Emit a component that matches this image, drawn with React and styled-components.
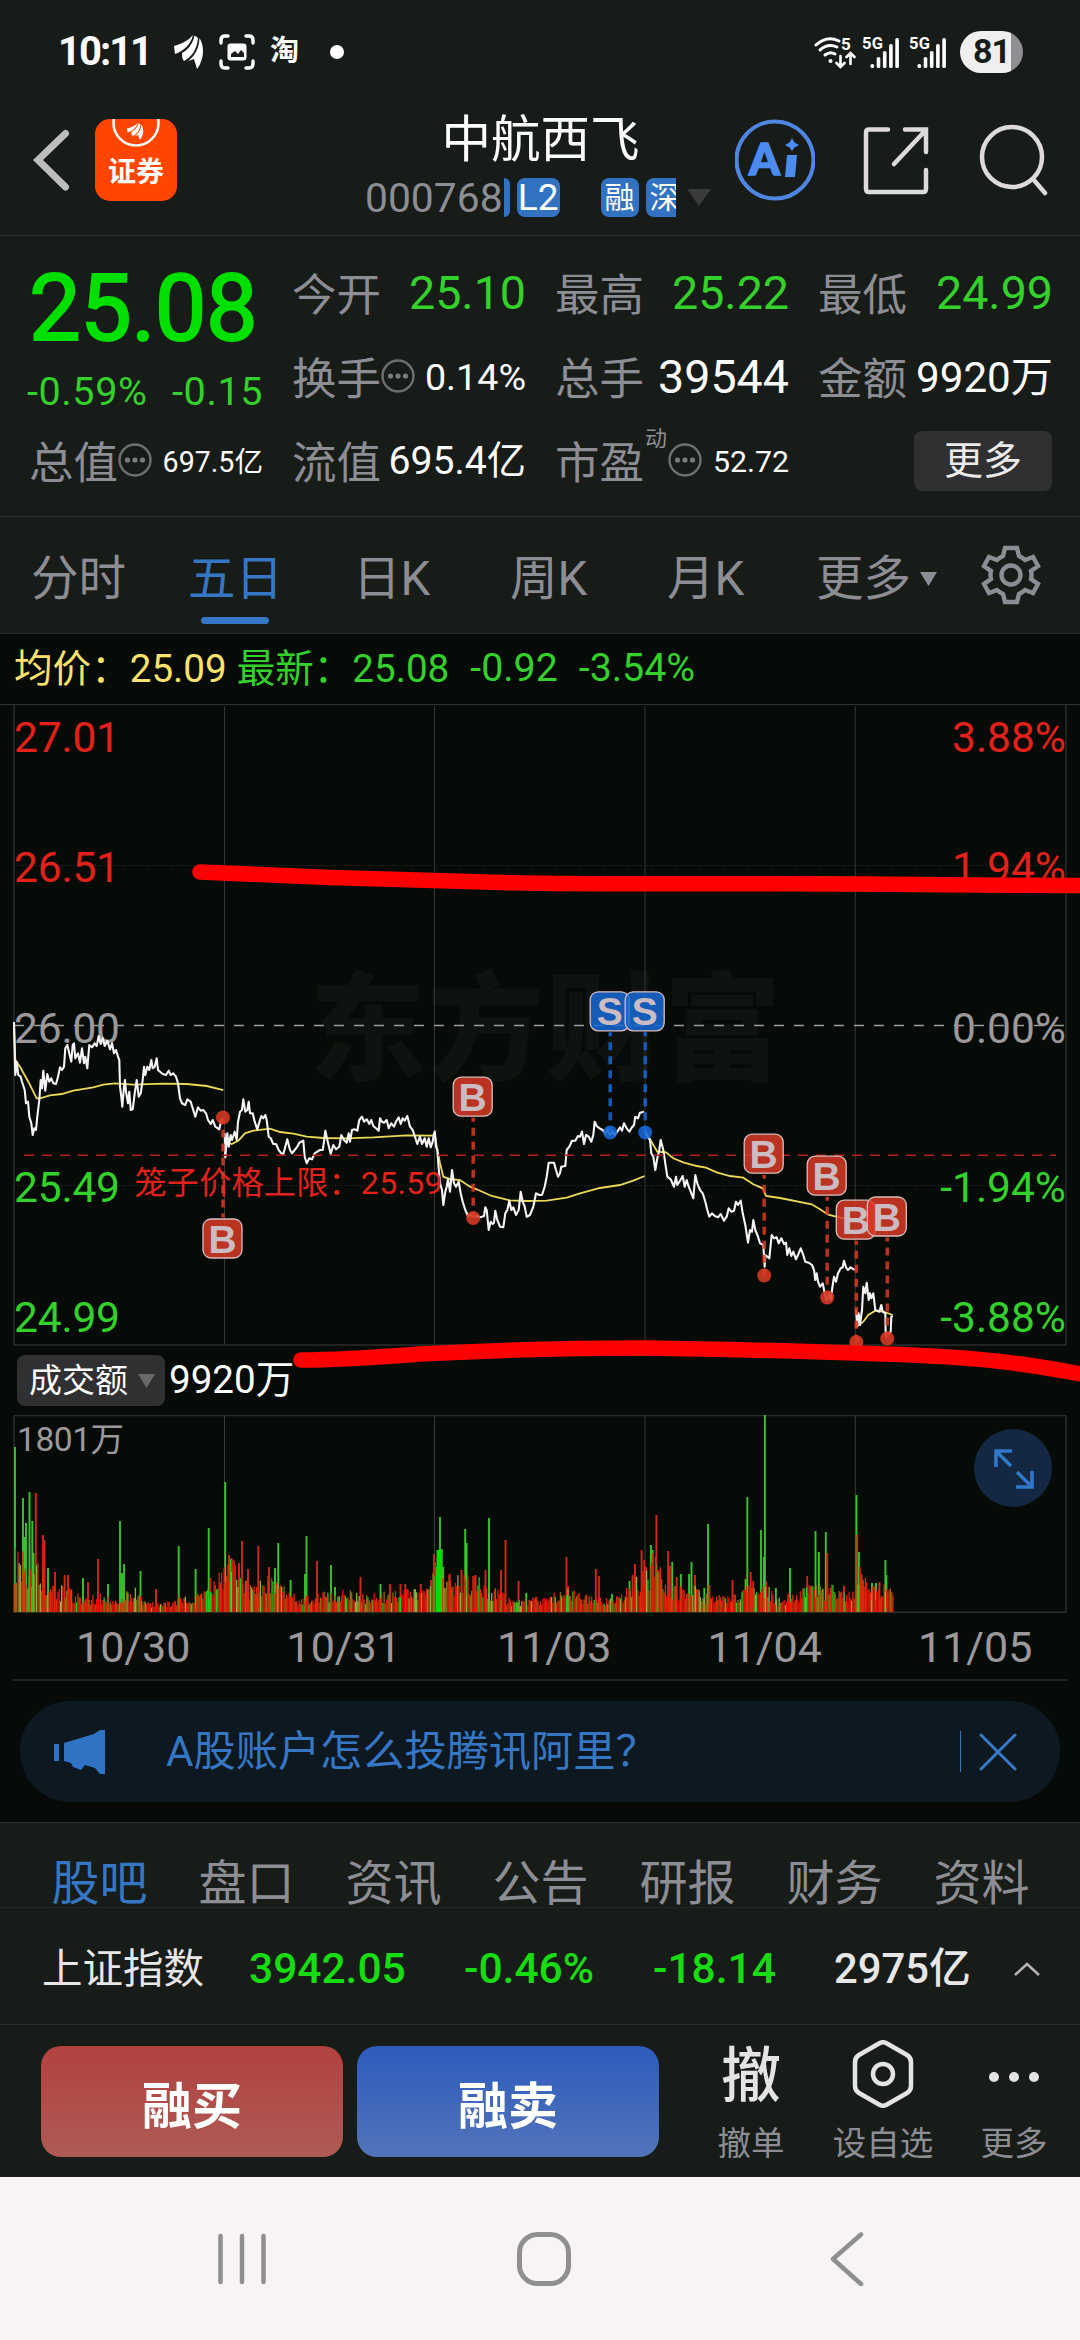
import React from "react";
import styled, { createGlobalStyle } from "styled-components";

const C = {
  panel: "#181c19",
  chart: "#070b07",
  line: "#303331",
  green: "#34d12c",
  bright: "#00e000",
  red: "#e3211a",
  grey: "#8d8d94",
  axis: "#9b999c",
  blue: "#3577c4",
  white: "#fcfcfc",
};

const Global = createGlobalStyle`
  * { box-sizing: border-box; }
  body { margin: 0; background: ${C.panel}; }
  svg { display: block; flex: none; }
  svg text { font-family: Roboto, "Noto Sans CJK SC", sans-serif; }
`;

const Screen = styled.div`
  width: 1080px;
  height: 2340px;
  overflow: hidden;
  display: flex;
  flex-direction: column;
  background: ${C.panel};
  color: ${C.white};
  font-family: Roboto, "Noto Sans CJK SC", sans-serif;
  white-space: nowrap;
`;

const Txt = styled.span`
  font-size: ${(p) => p.$s}px;
  line-height: 1.15;
  color: ${(p) => p.$c || "inherit"};
  font-weight: ${(p) => p.$w || 400};
  letter-spacing: ${(p) => p.$ls || 0}px;
`;

/* ---------- status bar ---------- */
const StatusBar = styled.div`
  height: 100px;
  padding: 4px 57px 0 58px;
  display: flex;
  align-items: center;
`;
const Notices = styled.div`
  display: flex;
  align-items: center;
  gap: 15px;
  margin-left: 23px;
`;
const Signals = styled.div`
  display: flex;
  align-items: center;
  gap: 8px;
  margin-left: auto;
`;
const Battery = styled.div`
  width: 63px;
  height: 42px;
  margin-left: 4px;
  border-radius: 21px;
  background: linear-gradient(90deg, #efeff0 81%, #918e93 81%);
  color: #181c19;
  display: flex;
  align-items: center;
  justify-content: center;
`;

/* ---------- header ---------- */
const Header = styled.header`
  height: 136px;
  padding: 0 26px 16px 32px;
  display: flex;
  align-items: center;
  border-bottom: 1px solid ${C.line};
`;
const AppLogo = styled.div`
  width: 82px;
  height: 82px;
  margin-left: 23px;
  border-radius: 15px;
  background: #ff4500;
  display: flex;
  flex-direction: column;
  align-items: center;
  overflow: hidden;
  gap: 4px;
`;
const TitleBlock = styled.div`
  width: 351px;
  margin: 4px 19px 0 188px;
  display: flex;
  flex-direction: column;
  align-items: center;
  gap: 9px;
  padding-top: 7px;
`;
const CodeRow = styled.div`
  width: 100%;
  height: 40px;
  display: flex;
  align-items: center;
`;
const Tags = styled.div`
  width: 172px;
  margin: 0 11px 0 1px;
  display: flex;
  overflow: hidden;
`;
const Tag = styled.span`
  flex: none;
  width: ${(p) => p.$w}px;
  height: 39px;
  margin-right: ${(p) => p.$mr || 7}px;
  border-radius: ${(p) => (p.$cut ? "0 8px 8px 0" : "8px")};
  background: #3173c2;
  font-size: ${(p) => p.$s || 30}px;
  line-height: 39px;
  text-align: center;
`;

/* ---------- quote ---------- */
const Quote = styled.section`
  height: 281px;
  padding: 16px 28px 0 29px;
  display: flex;
  gap: 31px;
  border-bottom: 1px solid ${C.line};
`;
const PriceCol = styled.div`
  width: 232px;
  display: flex;
  flex-direction: column;
`;
const Price = styled.div`
  height: 112px;
  line-height: 114px;
  font-size: 92px;
  letter-spacing: -0.6px;
  color: ${C.bright};
  -webkit-text-stroke: 2px ${C.bright};
`;
const Change = styled.div`
  height: 56px;
  display: flex;
  align-items: center;
  justify-content: space-between;
  margin: 0 -2px 0 -2px;
`;
const Stats = styled.div`
  flex: 1;
  display: grid;
  grid-template-columns: 232px 232px 233px;
  grid-auto-rows: 84px;
  column-gap: 31px;
`;
const Stat = styled.div`
  height: 84px;
  display: flex;
  align-items: center;
  justify-content: space-between;
  margin-right: -2px;
`;
const StatLabel = styled.span`
  display: flex;
  align-items: center;
  font-size: 44.5px;
  padding-bottom: 5px;
  color: ${C.grey};
`;
const Sup = styled.sup`
  font-size: 22px;
  line-height: 24px;
  margin: 0 1px 41px 1px;
  vertical-align: baseline;
`;
const MoreButton = styled.button`
  width: 138px;
  height: 60px;
  margin: 0 1px 3px auto;
  border: 0;
  border-radius: 8px;
  background: #302f31;
  color: #ecebec;
  font: 39px/58px Roboto, "Noto Sans CJK SC", sans-serif;
  padding: 0;
`;

/* ---------- period tabs ---------- */
const Periods = styled.nav`
  height: 117px;
  padding-left: 31px;
  display: flex;
  border-bottom: 1px solid #2a2b2a;
`;
const Period = styled.div`
  width: ${(p) => p.$w}px;
  flex: none;
  padding-top: ${(p) => p.$top || 34}px;
  font-size: 47.5px;
  line-height: 56px;
  color: ${(p) => (p.$on ? C.blue : C.grey)};
`;
const Underline = styled.div`
  width: 68px;
  height: 7px;
  margin: 10px 0 0 13px;
  border-radius: 4px;
  background: ${C.blue};
`;
const PeriodMore = styled.div`
  display: flex;
  align-items: center;
  gap: 9px;
`;

/* ---------- charts ---------- */
const ChartArea = styled.section`
  position: relative;
  height: 1189px;
  background: ${C.chart};
  border-bottom: 1px solid ${C.line};
`;
const Legend = styled.div`
  height: 70px;
  padding-left: 14px;
  display: flex;
  align-items: center;
  gap: 21px;
  color: ${C.green};
`;
const LegendPair = styled.div`
  display: flex;
  gap: 10px;
`;
const Indicator = styled.div`
  height: 69px;
  padding: 0 0 0 17px;
  display: flex;
  align-items: center;
  gap: 4px;
`;
const Picker = styled.div`
  width: 148px;
  height: 51px;
  padding-left: 12px;
  border-radius: 8px;
  background: #302f31;
  display: flex;
  align-items: center;
  gap: 10px;
`;
const Dates = styled.div`
  height: 69px;
  margin: 0 13px;
  padding: 4px 0 0 15px;
  display: grid;
  grid-template-columns: repeat(5, 210.5px);
  align-items: center;
  justify-items: center;
  border-bottom: 2px solid #242725;
`;
const VolumeBox = styled.div`
  position: relative;
  height: 197px;
`;
const Expand = styled.div`
  position: absolute;
  left: 974px;
  top: 14px;
`;
const Scribble = styled.svg`
  position: absolute;
  left: 0;
  top: 0;
  pointer-events: none;
`;

const Banner = styled.div`
  width: 1040px;
  height: 101px;
  margin: 20px 20px 0;
  padding: 0 43px 0 33px;
  border-radius: 50px;
  background: #0e1820;
  display: flex;
  align-items: center;
`;
const BannerText = styled.div`
  margin-left: 59px;
  flex: 1;
  font-size: 42.200px;
  line-height: 50px;
  color: ${C.blue};
`;
const Divider = styled.div`
  width: 1px;
  height: 41px;
  margin-right: 18px;
  background: ${C.blue};
`;

/* ---------- bottom ---------- */
const InfoTabs = styled.nav`
  height: 85px;
  padding: 33px 25px 0 26px;
  display: grid;
  grid-template-columns: repeat(7, 147px);
  border-bottom: 1px solid #222623;
`;
const InfoTab = styled.div`
  height: 52px;
  text-align: center;
  font-size: 48px;
  line-height: 56px;
  color: ${(p) => (p.$on ? C.blue : C.grey)};
`;
const IndexRow = styled.div`
  height: 117px;
  padding: 5px 40px 0 42px;
  display: flex;
  align-items: center;
  border-bottom: 1px solid #2b2e2c;
`;
const IndexCell = styled.div`
  width: ${(p) => p.$w}px;
  font-size: ${(p) => p.$s || 42.5}px;
  line-height: 52px;
  font-weight: ${(p) => p.$b || 500};
  color: ${(p) => p.$c || "#e8e6e7"};
`;
const Actions = styled.div`
  height: 152px;
  padding: 21px 0 0 41px;
  display: flex;
`;
const TradeButton = styled.button`
  flex: none;
  width: 302px;
  height: 111px;
  margin-right: 14px;
  border: 0;
  border-radius: 20px;
  background: linear-gradient(${(p) => p.$from}, ${(p) => p.$to});
  color: #fff;
  font: 700 50px/60px Roboto, "Noto Sans CJK SC", sans-serif;
  padding: 10px 0 0;
`;
const Action = styled.div`
  flex: none;
  width: ${(p) => p.$w}px;
  display: flex;
  flex-direction: column;
  align-items: center;
`;
const ActionIcon = styled.div`
  height: 62px;
  display: flex;
  align-items: center;
  font-size: 60px;
  line-height: 60px;
  font-weight: 500;
  color: #e4e4e4;
  margin-bottom: 17px;
`;
const SystemNav = styled.div`
  flex: 1;
  padding: 0 0 0 218px;
  background: #f7f3f7;
  display: flex;
  align-items: center;
`;

/* ---------- icons ---------- */
const Feather = ({ w, h }) => (
  <svg width={w} height={h} viewBox="0 0 30 34" fill="#fff">
    <path d="M0 11 C7 9 14 6 19 0 C17 9 10 16 1 19 Z" />
    <path d="M20.500 .5 L24 3 C23 14 18 22 10 26 C8 24 8 21 8 18 C15 14 19 8 20.500 .5Z" />
    <path d="M25.500 3 C31 12 30 25 23 34 L20 24 L14 26 C22 20 25 12 25.500 3Z" />
  </svg>
);
const Shot = () => (
  <svg width="36" height="36" viewBox="0 0 36 36" fill="none">
    <path
      d="M2 9V6Q2 2 6 2H9M27 2H30Q34 2 34 6V9M34 27V30Q34 34 30 34H27M9 34H6Q2 34 2 30V27"
      stroke="#fff"
      strokeWidth="3.400"
      strokeLinecap="round"
    />
    <rect x="8.500" y="9.500" width="19" height="17" rx="3" fill="#fff" />
    <path d="M12 23v-3l4-3 3 3 3-4 3 3v4z" fill="#181c19" />
  </svg>
);
const Wifi = () => (
  <svg width="42" height="34" viewBox="0 0 42 34" fill="none" stroke="#fff" strokeLinecap="round" style={{ marginRight: -2 }}>
    <path d="M2 10Q13 0 25 6" strokeWidth="3" />
    <path d="M6 15Q14 8 23 12" strokeWidth="3" />
    <path d="M11 20Q16 16 21 19" strokeWidth="3" />
    <circle cx="16.500" cy="26" r="2" fill="#fff" stroke="none" />
    <path d="M26.500 21V31M22.500 28L26.500 32L30.500 28M36.500 29V19M32.500 22L36.500 18L40.500 22" strokeWidth="2.600" />
    <text x="27" y="15" fontSize="17" fontWeight="700" fill="#fff" stroke="none">5</text>
  </svg>
);
const Signal5G = () => (
  <svg width="39" height="34" viewBox="0 0 39 34" fill="#fff">
    <text x="0" y="13.500" fontSize="16.500" fontWeight="700" textLength="21">5G</text>
    {[4, 11, 17, 24, 30].map((h, i) => (
      <rect key={i} x={8.500 + i * 6.200} y={33 - h} width="3.600" height={h} rx="1.600" />
    ))}
  </svg>
);
const MoreDots = () => (
  <svg width="34" height="34" viewBox="0 0 34 34">
    <circle cx="17" cy="17" r="15.500" fill="none" stroke="#706f70" strokeWidth="2.400" />
    {[9.500, 17, 24.500].map((x) => (
      <circle key={x} cx={x} cy="17" r="2.600" fill="#7c7b7e" />
    ))}
  </svg>
);
const Down = ({ w, h, c }) => (
  <svg width={w} height={h} viewBox="0 0 20 16" preserveAspectRatio="none">
    <path d="M0 0H20L10 16Z" fill={c} />
  </svg>
);
const Gear = () => (
  <svg width="60" height="60" viewBox="-30 -30 60 60" fill="none" stroke={C.grey} strokeWidth="4.400">
    <path d="M-6 -27H6L8 -19Q12 -17 14 -15L22 -18L27 -9L20 -4Q21 0 20 4L27 9L22 18L14 15Q12 17 8 19L6 27H-6L-8 19Q-12 17 -14 15L-22 18L-27 9L-20 4Q-21 0 -20 -4L-27 -9L-22 -18L-14 -15Q-12 -17 -8 -19Z" />
    <circle r="9.500" />
  </svg>
);

/* ---------- chart data ---------- */
/* Each series keeps its own plotting origin; three units make one pixel. */
const priceSeries = [
  [0, 920, "42,306 44,400 46,465 50,425 55,465 62,470 66,485 74,510 78,550 84,545 88,590 94,610 98,645 103,625 108,630 112,590 118,540 122,480 126,505 130,452 136,512 142,462 148,485 154,475 160,490 168,492 174,470 180,442 186,450 192,440 196,385 202,375 208,400 214,425 218,375 222,370 226,415 234,400 240,428 246,385 252,430 256,410 262,445 268,375 276,382 284,370 290,378 296,348 302,372 308,355 314,378 322,362 330,388 336,370 342,400 348,390 354,410 358,420 360,500 364,530 367,560 372,500 375,480 378,515 384,550 388,515 392,570 398,568 404,520 410,480 416,530 422,520 428,480 432,440 436,465 442,440 448,450 454,420 458,445 464,440 470,415 474,450 480,455 488,462 498,465 506,452 512,465 520,460 528,470 534,490 540,535 546,550 556,555 562,538 572,545 578,565 586,590 594,562 602,572 610,570 618,580 624,600 632,612 638,600 646,620 658,628 664,600 668,595"],
  [0, 920, "674,640 676,712 682,640 686,680 692,645 696,660 704,635 710,660 714,605 720,575 726,570 730,538 736,575 742,570 746,545 750,580 758,580 764,605 772,628 780,600 784,588 790,595 796,585 800,600 806,650 812,655 820,672 828,672 836,690 844,700 850,702 856,680 862,658 870,690 876,700 884,690 892,680 898,668 910,662 914,710 920,730 928,715 936,718 944,700 952,695 960,690 968,690 972,665 976,632 984,668 992,702 1000,675 1008,688 1018,680 1024,645 1032,660 1040,668 1046,640 1050,665 1056,630 1064,628 1072,632 1078,600 1086,590 1092,605 1100,598 1108,612 1114,600 1120,618 1128,625 1136,632 1140,595 1146,605 1152,608 1160,600 1166,625 1174,610 1182,620 1188,605 1196,592 1202,612 1208,595 1214,602 1222,588 1230,620 1238,630 1244,648 1252,672 1260,650 1266,672 1274,655 1280,680 1286,655 1292,682 1298,665 1302,640 1306,640"],
  [420, 920, "44,632 48,680 52,690 56,745 60,790 66,810 70,855 76,815 80,800 84,778 90,815 96,750 102,790 108,800 116,785 122,820 128,845 136,870 144,888 152,885 160,890 170,888 182,892 192,888 196,862 200,870 206,930 212,905 218,912 222,908 226,872 232,900 240,920 250,922 256,880 262,870 268,842 274,870 280,862 288,885 296,870 302,815 308,845 314,860 320,890 330,885 340,860 348,820 358,825 366,825 374,800 380,770 386,728 402,728 408,750 414,770 420,760 424,740 436,738 440,690 448,680 456,662 466,662 474,648 480,650 486,635 492,672 498,645 506,650 514,665 520,645 524,605 530,618 538,625 548,630 556,640 564,628 570,645 578,635 584,645 592,635 600,622 606,632 612,610 620,625 628,635 636,622 642,615 646,590 654,595 660,578 672,575"],
  [420, 920, "676,632 682,650 690,660 694,700 700,710 706,750 712,715 718,690 722,660 730,690 736,730 742,770 752,778 762,800 768,770 772,795 780,782 788,768 794,800 800,780 806,800 812,815 820,835 826,765 832,790 840,810 848,820 856,845 862,870 868,890 876,880 884,888 894,892 902,882 912,902 920,890 926,865 934,875 942,872 948,845 954,855 962,842 968,880 976,915 984,968 990,930 996,935 1000,900 1006,930 1014,950 1020,970 1030,975 1034,1040 1036,1005 1048,1015 1055,945 1062,955 1070,952 1076,970 1084,955 1092,972 1098,968 1102,1005 1108,985 1114,1008 1120,995 1128,1018 1134,1005 1142,985 1148,1000 1156,1025 1166,1028 1176,1035 1182,1050 1186,1080 1190,1060 1194,1085 1200,1100 1208,1090 1214,1120 1220,1140 1226,1120 1232,1140 1236,1110 1242,1070 1248,1085 1254,1060 1262,1045 1268,1042 1272,1022 1278,1042 1284,1050 1292,1042 1304,1050"],
  [720, 1080, "408,690 412,735 416,700 420,735 426,690 430,620 436,640 440,608 446,660 450,640 454,655 460,640 466,690 472,692 478,695 484,675 488,695 496,700 497,765 500,770 512,755 514,710 518,708"],
];
const averageSeries = [
  [0, 920, "42,310 46,420 60,440 85,485 110,535 120,535 150,526 185,522 220,512 280,502 310,494 345,490 400,494 490,491 560,492 620,498 670,510"],
  [0, 920, "674,665 695,672 715,662 735,640 760,632 810,626 840,636 880,641 920,650 970,654 1040,655 1120,652 1220,646 1302,647"],
  [420, 920, "44,640 50,680 60,730 70,770 90,777 120,780 150,800 170,808 215,828 270,841 320,843 380,842 440,833 480,820 540,804 600,795 640,782 674,768"],
  [420, 920, "680,640 700,675 712,695 738,697 760,715 790,727 830,738 858,743 890,757 930,768 970,773 1000,793 1028,805 1038,828 1080,834 1175,853 1200,868 1225,884 1260,893 1304,900"],
  [720, 1080, "408,742 430,725 445,705 466,692 490,695 518,705"],
];
const toPoints = ([ox, oy, raw]) =>
  raw
    .split(" ")
    .map((p) => {
      const [x, y] = p.split(",");
      return `${(ox + x / 3).toFixed(1)},${(oy + y / 3).toFixed(1)}`;
    })
    .join(" ");

const marks = [
  ["B", 222.5, 1238.5, 1117.5],
  ["B", 472.7, 1096.7, 1218],
  ["S", 609.7, 1011.3, 1132.5],
  ["S", 644.7, 1011.3, 1132.5],
  ["B", 763.7, 1153.7, 1275.5],
  ["B", 826.7, 1175.7, 1297.5],
  ["B", 855.8, 1219.7, 1342],
  ["B", 886.8, 1216.5, 1338.5],
];

const axis = [
  ["27.01", "3.88%", 751.5, C.red],
  ["26.51", "1.94%", 882, C.red],
  ["26.00", "0.00%", 1042.5, C.axis],
  ["25.49", "-1.94%", 1201.5, C.green],
  ["24.99", "-3.88%", 1332.3, C.green],
];
const days = [224.5, 434.5, 645, 855.3];

/* Tall volume bars: x, height, rising or falling. */
const spikes =
  "15,165,g 23,114,g 24.5,75,g 26,89,g 29.5,120,g 32.3,91,g 33.5,59,g 35.8,119,r 43,77,r 44.5,72,r 48,44,g 55,40,r 64.7,37,r 68,37,r 83,34,g 88,30,r 98,53,r 108,28,g 120,91,g 122,39,g 124,48,g 140.500,41,g 156,23,r 178.700,66,g 195.600,43,g 208.700,84,g 210.400,34,r 225.200,130,g 229,57,r 231.400,54,r 239,49,r 242,71,r 248,43,r 258.300,66,r 269,45,r 275,44,g 278.200,69,g 290.600,32,g 305,38,g 306.500,76,g 317,51,r 331,47,g 335,25,g 360.500,35,r 380.500,28,g 390,28,r 400.500,28,r 405.300,28,r 420.800,28,r 431,32,r 433.900,58,r 438,62,g 440,95,g 441.800,63,g 443.200,45,g 449.700,38,r 461.500,42,r 465.200,83,g 466.600,69,g 475.500,37,r 489,94,g 485.500,42,r 501,42,r 505.500,72,r 518.600,31,r 526.200,19,g 566.500,55,r 568.200,26,r 595.800,43,r 598.900,36,r 612,18,g 629.500,31,g 632.600,37,r 635,48,r 641.600,62,r 644.300,52,r 646,45,r 650.900,67,g 652.600,62,g 656.400,97,r 658.500,42,r 668.100,61,r 669.800,46,r 672.200,50,g 676.700,35,r 680.800,38,g 689.100,38,g 691.500,50,g 695,37,r 704.300,24,g 708,88,g 709.400,27,r 732.500,32,r 745.600,33,g 747.300,115,g 750.700,40,r 753.200,31,r 761,82,g 763.800,55,g 764.900,197,g 765.900,27,r 775.900,24,g 790,44,g 788.300,18,r 807.200,36,r 815.500,81,g 818.900,60,g 825.800,80,g 827.200,59,r 844,26,r 856.500,117,g 857.200,77,r 858.900,60,g 859.900,45,r 861.300,37,r 863,32,r 872,29,g 876,29,g 879.500,30,r 885.400,52,g 886.400,37,g 891.200,20,r"
    .split(" ")
    .map((s) => s.split(","));

/* Upper edge of the short bars. */
const envelope = [
  [13, 62], [26, 52], [38, 46], [52, 26], [70, 20], [84, 14], [100, 16], [116, 12], [134, 24], [144, 10],
  [165, 8], [180, 16], [192, 14], [208, 20], [222, 44], [232, 52], [240, 36], [252, 22], [268, 34], [284, 22],
  [300, 12], [320, 18], [345, 20], [370, 16], [400, 20], [425, 20], [434, 48], [445, 34], [462, 34], [480, 30],
  [500, 18], [515, 10], [545, 15], [566, 22], [580, 16], [612, 12], [630, 24], [645, 44], [655, 54], [665, 28],
  [678, 22], [690, 26], [705, 16], [725, 14], [742, 18], [750, 36], [760, 22], [766, 30], [775, 12], [790, 14],
  [810, 26], [830, 24], [845, 18], [854, 18], [860, 44], [868, 22], [885, 28], [893, 16],
];
const levelAt = (x) => {
  for (let i = 1; i < envelope.length; i++) {
    const [x0, h0] = envelope[i - 1];
    const [x1, h1] = envelope[i];
    if (x <= x1) return h0 + ((h1 - h0) * (x - x0)) / (x1 - x0);
  }
  return 0;
};
const shortBars = [];
let seed = 17;
const rand = () => (seed = (seed * 16807) % 2147483647) / 2147483647;
for (let x = 13.5; x < 893; x += 1.25) {
  const h = levelAt(x) * (0.45 + 0.72 * rand());
  const r = rand();
  shortBars.push([x, h, r < 0.5 ? "#dc280a" : r < 0.66 ? "#f40800" : r < 0.8 ? "#8c6a0c" : r < 0.9 ? "#8fb03c" : "#22c81a"]);
}

function PriceChart() {
  return (
    <svg width="1080" height="642" viewBox="0 704 1080 642">
      <text x="309" y="1071" fontSize="117" fontWeight="900" fill="#0f130f" textLength="472">东方财富</text>
      <path d="M0 704.500H1080" stroke={C.line} />
      <path d="M14 704V1345H1066V704" fill="none" stroke="#2a2d2b" strokeWidth="1.500" />
      {days.map((x) => (
        <path key={x} d={`M${x} 706V1344`} stroke="#343735" />
      ))}
      <path d="M14 865.500H1066M14 1185.500H1066" stroke="#2c2f2d" strokeDasharray="1 2" />
      <path d="M14 1025.500H1066" stroke="#9b9b9b" strokeWidth="1.600" strokeDasharray="10 10" />
      {axis.map(([l, r, y, c]) => (
        <g key={l} fill={c} fontSize="42.500">
          <text x="14" y={y} textLength="106">{l}</text>
          <text x="1066" y={y} textAnchor="end">{r}</text>
        </g>
      ))}
      {averageSeries.map((s, i) => (
        <polyline key={i} points={toPoints(s)} fill="none" stroke="#ecd955" strokeWidth="1.800" />
      ))}
      {priceSeries.map((s, i) => (
        <polyline key={i} points={toPoints(s)} fill="none" stroke="#f6f4f6" strokeWidth="2.100" strokeLinejoin="round" />
      ))}
      <path d="M24 1155.300H1056" stroke="#b31f1c" strokeWidth="1.500" strokeDasharray="10 8" />
      <text x="134.500" y="1194" fontSize="32" fill={C.red} textLength="308">笼子价格上限：25.59</text>
      {marks.map(([t, x, y, dot], i) => {
        const c = t === "B" ? "#d93a26" : "#1668d6";
        const dir = dot > y ? 1 : -1;
        return (
          <g key={i}>
            <path d={`M${x + 0.5} ${y + dir * 21}V${dot}`} stroke={c} strokeWidth="3.500" strokeDasharray="8 6" strokeDashoffset="4" opacity=".85" />
            <circle cx={x + 0.5} cy={dot} r="7" fill={c} opacity=".88" />
            <rect x={x - 19.500} y={y - 19.500} width="39" height="39" rx="8" fill={c} fillOpacity=".85" stroke="#d8bebe" strokeWidth="1.300" />
            <text x={x} y={y + 14} textAnchor="middle" fontSize="39" fontWeight="700" fill="#cbbcc2" style={{ fontFamily: "Liberation Sans, sans-serif" }}>
              {t}
            </text>
          </g>
        );
      })}
    </svg>
  );
}

function VolumeChart() {
  return (
    <svg width="1080" height="198" viewBox="0 1415 1080 198">
      <path d="M14 1415.500H1066V1612.300H14Z" fill="none" stroke="#2a2d2b" strokeWidth="1.500" />
      {days.map((x) => (
        <path key={x} d={`M${x} 1416V1612`} stroke="#3a3a3a" />
      ))}
      {spikes.map(([x, h, k], i) => (
        <rect key={i} x={x - 0.95} y={1612 - h} width="1.900" height={h} fill={k === "g" ? "#38c42d" : "#d2261a"} />
      ))}
      {shortBars.map(([x, h, c], i) => (
        <rect key={i} x={x} y={1612 - h} width="1.300" height={h} fill={c} />
      ))}
      <rect x="436.500" y="1550" width="5.500" height="62" fill="#08dc08" />
      <text x="17" y="1451" fontSize="33.500" fill={C.axis} textLength="107">1801万</text>
    </svg>
  );
}

export default function App() {
  return (
    <Screen>
      <Global />
      <StatusBar>
        <Txt $s={40} $w={700} $ls={-2}>10:11</Txt>
        <Notices>
          <Feather w={30} h={34} />
          <Shot />
          <Txt $s={29} $w={700}>淘</Txt>
          <svg width="52" height="14"><circle cx="23" cy="7" r="7" fill="#fff" /></svg>
        </Notices>
        <Signals>
          <Wifi />
          <Signal5G />
          <Signal5G />
          <Battery><Txt $s={34} $w={700} $ls={-1}>81</Txt></Battery>
        </Signals>
      </StatusBar>

      <Header>
        <svg width="40" height="64" viewBox="0 0 40 64" fill="none">
          <path d="M33.500 5.500L6 32L33.500 59" stroke="#bdbdbd" strokeWidth="7" strokeLinecap="round" />
        </svg>
        <AppLogo>
          <svg width="82" height="34" viewBox="0 0 82 34" fill="none">
            <circle cx="41" cy="4" r="22.500" stroke="#fff" strokeWidth="2.500" />
            <g transform="translate(32 4) scale(.56 .5)" fill="#fff">
              <path d="M0 11 C7 9 14 6 19 0 C17 9 10 16 1 19 Z M20.500 .5L24 3C23 14 18 22 10 26 C8 24 8 21 8 18C15 14 19 8 20.500 .5Z M25.500 3C31 12 30 25 23 34L20 24L14 26C22 20 25 12 25.500 3Z" />
            </g>
          </svg>
          <Txt $s={28} $w={700}>证券</Txt>
        </AppLogo>
        <TitleBlock>
          <Txt $s={49.5}>中航西飞</Txt>
          <CodeRow>
            <Txt $s={40.8} $c={C.grey}>000768</Txt>
            <Tags>
              <Tag $w={6} $cut $s={24} />
              <Tag $w={43} $mr={41} $s={37}>L2</Tag>
              <Tag $w={38}>融</Tag>
              <Tag $w={38}>深</Tag>
            </Tags>
            <Down w={24} h={17} c="#3b3b3b" />
          </CodeRow>
        </TitleBlock>
        <svg width="80" height="82" viewBox="0 0 80 82">
          <circle cx="40" cy="41" r="38.500" fill="none" stroke="#4f86e2" strokeWidth="4" />
          <text x="14" y="56" fontSize="44" fontWeight="900" fill="#4c8bf0" stroke="#4c8bf0" strokeWidth="1.500" style={{ fontFamily: "Lato, sans-serif" }}>A</text>
          <path d="M52 36H62L60 58H50Z M57 19L59.500 23.500L64 26L59.500 28.500L57 32L54.500 28.500L50 26L54.500 23.500Z" fill="#4c8bf0" />
        </svg>
        <svg width="68" height="70" viewBox="0 0 68 70" fill="none" stroke="#dcdadd" strokeWidth="4.500" strokeLinecap="round" style={{ marginLeft: 48 }}>
          <path d="M25 4.500H6Q3 4.500 3 7.500V64Q3 67 6 67H60Q63 67 63 64V45M42 4.500H63V27M61 7L31 39" />
        </svg>
        <svg width="72" height="72" viewBox="0 0 72 72" fill="none" stroke="#dcdadd" strokeWidth="4.500" strokeLinecap="round" style={{ marginLeft: 48 }}>
          <circle cx="33" cy="33" r="30" />
          <path d="M54 55L66 69" />
        </svg>
      </Header>

      <Quote>
        <PriceCol>
          <Price>25.08</Price>
          <Change>
            <Txt $s={39.5} $ls={0.6} $c={C.green}>-0.59%</Txt>
            <Txt $s={39.5} $ls={0.6} $c={C.green}>-0.15</Txt>
          </Change>
          <Stat>
            <StatLabel>总值<MoreDots /></StatLabel>
            <Txt $s={28.6}>697.5亿</Txt>
          </Stat>
        </PriceCol>
        <Stats>
          <Stat><StatLabel>今开</StatLabel><Txt $s={46.6} $c={C.green}>25.10</Txt></Stat>
          <Stat><StatLabel>最高</StatLabel><Txt $s={46.6} $c={C.green}>25.22</Txt></Stat>
          <Stat><StatLabel>最低</StatLabel><Txt $s={46.6} $c={C.green}>24.99</Txt></Stat>
          <Stat><StatLabel>换手<MoreDots /></StatLabel><Txt $s={37.7}>0.14%</Txt></Stat>
          <Stat><StatLabel>总手</StatLabel><Txt $s={46.6}>39544</Txt></Stat>
          <Stat><StatLabel>金额</StatLabel><Txt $s={42.2}>9920万</Txt></Stat>
          <Stat><StatLabel>流值</StatLabel><Txt $s={39.2}>695.4亿</Txt></Stat>
          <Stat><StatLabel>市盈<Sup>动</Sup><MoreDots /></StatLabel><Txt $s={30.3}>52.72</Txt></Stat>
          <Stat><MoreButton>更多</MoreButton></Stat>
        </Stats>
      </Quote>

      <Periods>
        <Period $w={157}>分时</Period>
        <Period $w={165} $on>五日<Underline /></Period>
        <Period $w={157}>日K</Period>
        <Period $w={157}>周K</Period>
        <Period $w={149}>月K</Period>
        <Period $w={165}>
          <PeriodMore>更多<Down w={17} h={14} c={C.grey} /></PeriodMore>
        </Period>
        <Period $w={70} $top={28}><Gear /></Period>
      </Periods>

      <ChartArea>
        <Legend>
          <LegendPair>
            <Txt $s={38.6} $c="#fbe26b">均价：25.09</Txt>
            <Txt $s={38.6}>最新：25.08</Txt>
          </LegendPair>
          <Txt $s={39.3}>-0.92</Txt>
          <Txt $s={39.3}>-3.54%</Txt>
        </Legend>
        <PriceChart />
        <Indicator>
          <Picker><Txt $s={33}>成交额</Txt><Down w={17} h={14} c="#686869" /></Picker>
          <Txt $s={38.6}>9920万</Txt>
        </Indicator>
        <VolumeBox>
          <VolumeChart />
          <Expand>
            <svg width="78" height="78" viewBox="0 0 78 78" fill="none" stroke="#3278c8" strokeWidth="3.600">
              <circle cx="39" cy="39" r="39" fill="#142843" stroke="none" />
              <path d="M38 22H22V38M23 23L37 37M42 58H58V42M57 57L43 43" />
            </svg>
          </Expand>
        </VolumeBox>
        <Dates>
          {["10/30", "10/31", "11/03", "11/04", "11/05"].map((d) => (
            <Txt key={d} $s={43} $c={C.axis}>{d}</Txt>
          ))}
        </Dates>
        <Banner>
          <svg width="54" height="46" viewBox="0 0 54 46" fill="#2f74c4">
            <path d="M1 15H6V32H1Z M11 14L41 5L47 1H52V45H47L42 39L32 36L28 41L20 38L18 34L11 32Z" />
          </svg>
          <BannerText>A股账户怎么投腾讯阿里？</BannerText>
          <Divider />
          <svg width="38" height="38" viewBox="0 0 38 38" stroke="#3679c4" strokeWidth="3" strokeLinecap="round">
            <path d="M2 2L36 36M36 2L2 36" />
          </svg>
        </Banner>
        <Scribble width="1080" height="1188" viewBox="0 634 1080 1188" fill="none" stroke="#ff0000" strokeWidth="15.500" strokeLinecap="round">
          <path d="M200 872C250 874 290 876 330 877.500C390 879 450 881.500 510 882.700C620 885 760 883 860 884C940 884.500 1010 885.500 1090 885.500" />
          <path d="M301 1360C340 1360 380 1357 420 1354C500 1350 570 1348 645 1348C720 1349 790 1351 855 1353C920 1355 970 1357 1020 1364C1050 1368 1070 1372 1092 1376" />
        </Scribble>
      </ChartArea>

      <InfoTabs>
        {["股吧", "盘口", "资讯", "公告", "研报", "财务", "资料"].map((t, i) => (
          <InfoTab key={t} $on={i === 0}>{t}</InfoTab>
        ))}
      </InfoTabs>
      <IndexRow>
        <IndexCell $w={207} $s={40.5} $b={400}>上证指数</IndexCell>
        <IndexCell $w={215} $c="#18dc12">3942.05</IndexCell>
        <IndexCell $w={189} $c="#18dc12">-0.46%</IndexCell>
        <IndexCell $w={181} $c="#18dc12">-18.14</IndexCell>
        <IndexCell $w={180} $s={41.8}>2975亿</IndexCell>
        <svg width="26" height="16" viewBox="0 0 26 16" fill="none" stroke="#b5b3b5" strokeWidth="2.500">
          <path d="M1 14L13 3L25 14" />
        </svg>
      </IndexRow>
      <Actions>
        <TradeButton $from="#b2413e" $to="#ad5b55">融买</TradeButton>
        <TradeButton $from="#2d5abd" $to="#5274b9">融卖</TradeButton>
        <Action $w={156}>
          <ActionIcon>撤</ActionIcon>
          <Txt $s={33.5} $c={C.grey}>撤单</Txt>
        </Action>
        <Action $w={108}>
          <ActionIcon>
            <svg width="62" height="68" viewBox="-31 -34 62 68" fill="none" stroke="#e4e4e4" strokeWidth="4.500" style={{ marginTop: -6 }}>
              <path d="M-4 -30.500Q0 -33 4 -30.500L24 -19Q28 -16.500 28 -12V12Q28 16.500 24 19L4 30.500Q0 33 -4 30.500L-24 19Q-28 16.500 -28 12V-12Q-28 -16.500 -24 -19Z" />
              <circle r="10" />
            </svg>
          </ActionIcon>
          <Txt $s={33.5} $c={C.grey}>设自选</Txt>
        </Action>
        <Action $w={154}>
          <ActionIcon>
            <svg width="52" height="12" viewBox="0 0 52 12" fill="#e4e4e4">
              <circle cx="6" cy="6" r="5" /><circle cx="26" cy="6" r="5" /><circle cx="46" cy="6" r="5" />
            </svg>
          </ActionIcon>
          <Txt $s={33.5} $c={C.grey}>更多</Txt>
        </Action>
      </Actions>

      <SystemNav>
        <svg width="48" height="54" viewBox="0 0 48 54" stroke="#8e8f8e" strokeWidth="4.500" strokeLinecap="round">
          <path d="M2.500 4V50M24 4V50M45.500 4V50" />
        </svg>
        <svg width="54" height="54" viewBox="0 0 54 54" fill="none" stroke="#8e8f8e" strokeWidth="5" style={{ marginLeft: 251 }}>
          <rect x="2.500" y="2.500" width="49" height="49" rx="18" />
        </svg>
        <svg width="34" height="54" viewBox="0 0 34 54" fill="none" stroke="#8e8f8e" strokeWidth="4.500" strokeLinecap="round" strokeLinejoin="round" style={{ marginLeft: 259 }}>
          <path d="M31 2.500L3 27L31 52" />
        </svg>
      </SystemNav>
    </Screen>
  );
}
